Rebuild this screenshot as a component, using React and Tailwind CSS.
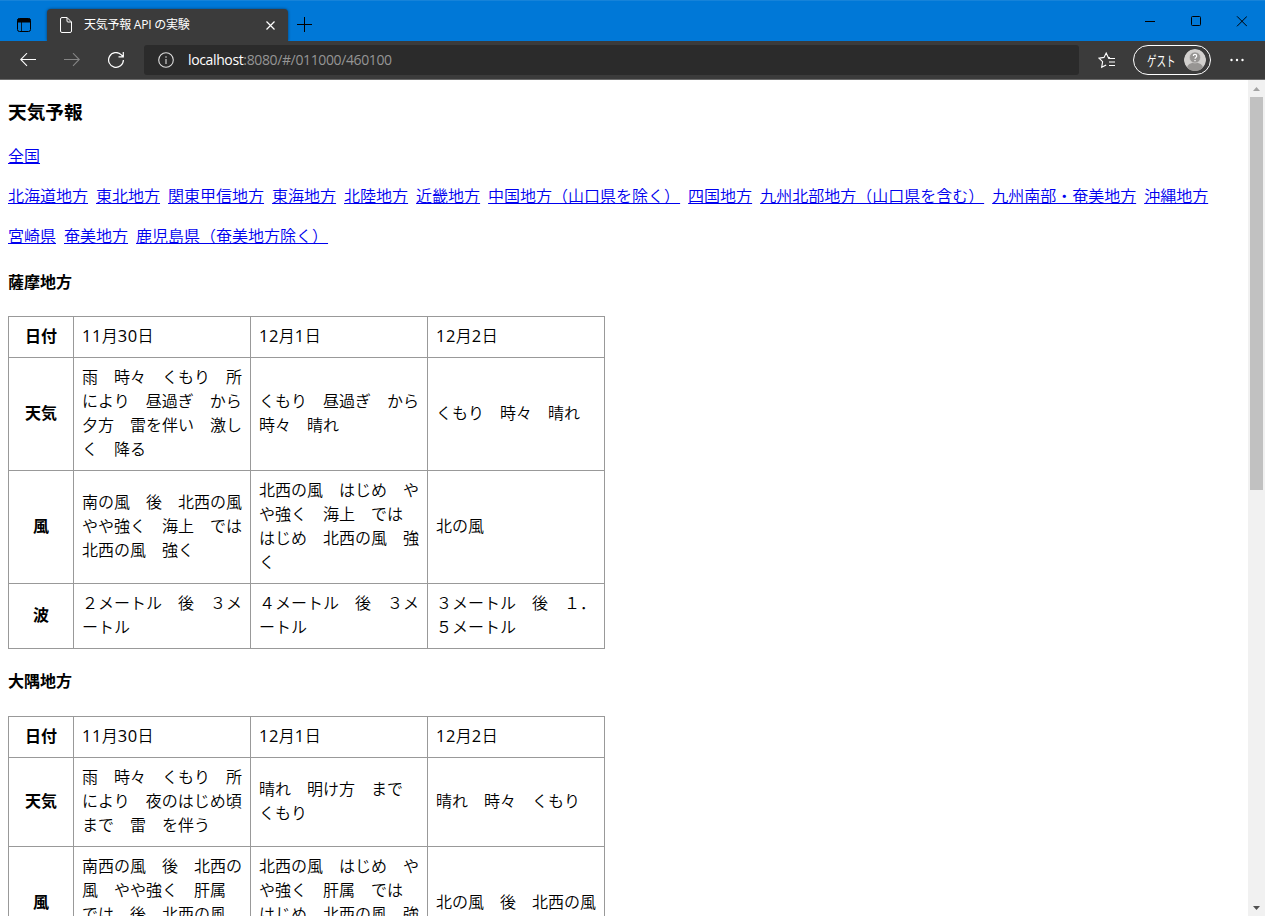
import React from 'react';

const regions = [
  '北海道地方', '東北地方', '関東甲信地方', '東海地方', '北陸地方', '近畿地方',
  '中国地方（山口県を除く）', '四国地方', '九州北部地方（山口県を含む）', '九州南部・奄美地方', '沖縄地方',
];
const prefectures = ['宮崎県', '奄美地方', '鹿児島県（奄美地方除く）'];

const areas = [
  {
    name: '薩摩地方',
    spacing: 'mb-[21px]',
    rows: [
      ['日付', ['11月30日'], ['12月1日'], ['12月2日']],
      ['天気', ['雨　時々　くもり　所', 'により　昼過ぎ　から', '夕方　雷を伴い　激し', 'く　降る'], ['くもり　昼過ぎ　から', '時々　晴れ'], ['くもり　時々　晴れ']],
      ['風', ['南の風　後　北西の風', 'やや強く　海上　では', '北西の風　強く'], ['北西の風　はじめ　や', 'や強く　海上　では', 'はじめ　北西の風　強', 'く'], ['北の風']],
      ['波', ['２メートル　後　３メ', 'ートル'], ['４メートル　後　３メ', 'ートル'], ['３メートル　後　１．', '５メートル']],
    ],
  },
  {
    name: '大隅地方',
    spacing: 'mb-[22px]',
    rows: [
      ['日付', ['11月30日'], ['12月1日'], ['12月2日']],
      ['天気', ['雨　時々　くもり　所', 'により　夜のはじめ頃', 'まで　雷　を伴う'], ['晴れ　明け方　まで', 'くもり'], ['晴れ　時々　くもり']],
      ['風', ['南西の風　後　北西の', '風　やや強く　肝属', 'では　後　北西の風', '強く'], ['北西の風　はじめ　や', 'や強く　肝属　では', 'はじめ　北西の風　強', 'く'], ['北の風　後　北西の風']],
    ],
  },
];

function Links({ items }) {
  return (
    <p className="mb-4 flex h-6 gap-2 leading-6">
      {items.map((t) => (
        <a key={t} href="#/" className="whitespace-nowrap text-[#0000ee] underline decoration-[#0000ee] decoration-1 underline-offset-1">{t}</a>
      ))}
    </p>
  );
}

// Sets half-width digits in a slightly wider Latin face than the kanji around them.
function Line({ text }) {
  return text.split(/([0-9]+)/).map((part, i) =>
    i % 2 ? (
      <span key={i} className="font-['Open_Sans',sans-serif] text-[16.5px] leading-none font-normal tracking-[0.45px]">{part}</span>
    ) : (
      part
    ),
  );
}

function Forecast({ area }) {
  return (
    <section>
      <h4 className={`${area.spacing} h-6 font-bold leading-6`}>{area.name}</h4>
      <table className="mb-[21px] w-[597px] table-fixed border-collapse">
        <colgroup>
          <col className="w-[65px]" />
          <col className="w-[177px]" />
          <col className="w-[177px]" />
          <col className="w-[177px]" />
        </colgroup>
        <tbody>
          {area.rows.map(([head, ...cells]) => (
            <tr key={head}>
              <th className="border border-[#999] p-2 leading-6 font-bold">{head}</th>
              {cells.map((lines, i) => (
                <td key={i} className="border border-[#999] p-2 align-middle leading-6">
                  {lines.map((l, j) => <div key={j} className="h-6 whitespace-nowrap"><Line text={l} /></div>)}
                </td>
              ))}
            </tr>
          ))}
        </tbody>
      </table>
    </section>
  );
}

function TitleBar() {
  return (
    <div className="flex h-[41px] shrink-0 border-t border-[#1683d9] bg-[#0078d7]">
      <div className="flex w-[47px] pt-[17px] pl-[17px]">
        <svg width="14" height="14" viewBox="0 0 14 14" fill="none" stroke="#000">
          <rect x=".5" y=".5" width="13" height="13" rx="2" />
          <path d="M1 1h12v3H1z" fill="#000" />
          <path d="M4.5 4v9.5" strokeWidth=".8" />
        </svg>
      </div>
      <div className="mt-2 flex h-8 w-[241px] items-center rounded-t-[4px] bg-[#3b3b3b] pl-[13px] text-white shadow-[0_0_3px_rgba(0,0,0,0.5)]">
        <svg width="12" height="16" viewBox="0 0 12 16" fill="none" stroke="#fff" strokeLinejoin="round">
          <path d="M.5 2Q.5.5 2 .5h5l4.500 4.500v9q0 1.500-1.500 1.500H2Q.5 15.500.5 14zM7 .5v3.500q0 1 1 1h3.500" />
        </svg>
        <span className="ml-3 w-[182px] whitespace-nowrap font-['Open_Sans','Noto_Sans_CJK_JP',sans-serif] text-xs tracking-[-0.25px]">天気予報 API の実験</span>
        <svg width="9" height="9" viewBox="0 0 9 9" fill="none" stroke="#fff" strokeWidth="1.2"><path d="M.5.5l8 8M8.500.5l-8 8" /></svg>
      </div>
      <svg className="mt-4 ml-[9px]" width="15" height="15" viewBox="0 0 15 15" fill="none" stroke="#000"><path d="M7.500 0v15M0 7.500h15" /></svg>
      <div className="ml-auto flex pt-[15px] pr-[18px]">
        <svg width="102" height="11" viewBox="0 0 102 11" fill="none" stroke="#000">
          <path d="M0 5.500h10" />
          <rect x="46.500" y=".5" width="9" height="9" rx="1" />
          <path d="M92 .3l10 10M102 .3l-10 10" />
        </svg>
      </div>
    </div>
  );
}

function Toolbar() {
  return (
    <div className="flex h-[39px] shrink-0 items-center border-b border-[#6b6b6b] bg-[#3b3b3b] pl-5">
      <svg width="16" height="14" viewBox="0 0 16 14" fill="none" stroke="#fff" strokeWidth="1.1"><path d="M16 6.500H.7M7 .2L.7 6.500 7 12.800" /></svg>
      <svg className="ml-7" width="16" height="14" viewBox="0 0 16 14" fill="none" stroke="#858585" strokeWidth="1.1"><path d="M0 6.500h15.300M9 .2L15.300 6.500 9 12.800" /></svg>
      <svg className="ml-7" width="16" height="17" viewBox="0 0 16 17" fill="none" stroke="#fff" strokeWidth="1.2"><path d="M15.400 8a7.400 7.400 0 1 1-2.300-5.400L15 4.500M15.300 0v4.800H10.500" /></svg>
      <div className="ml-5 flex h-[30px] w-[935px] items-center rounded-[3px] bg-[#2b2b2b] pl-3.5">
        <svg width="16" height="16" viewBox="0 0 16 16" fill="none" stroke="#ddd" strokeWidth="1.1">
          <circle cx="8" cy="8" r="7.300" />
          <path d="M8 7v5M8 4.200v1.500" />
        </svg>
        <span className="ml-3.5 font-['Open_Sans',sans-serif] text-sm tracking-[-0.37px] text-[#959595]"><span className="text-white">localhost</span>:8080/#/011000/460100</span>
      </div>
      <svg className="ml-[19px]" width="18" height="17" viewBox="0 0 18 17" fill="none" stroke="#fff" strokeWidth="1.1">
        <path d="M12 5.700L10.300 5.400 8.200 1 6 5.400 1 6.100l3.600 3.600-.9 5.600 4.500-2.400M10 6.500h7M11 10h6M11 13.500h6" />
      </svg>
      <div className="ml-[17px] flex h-[30px] w-[78px] items-center rounded-full border border-white pl-[13px] text-white">
        <span className="w-[37px] whitespace-nowrap"><span className="inline-block origin-left scale-x-[0.68] font-['Noto_Sans_CJK_JP',sans-serif] text-sm leading-5">ゲスト</span></span>
        <svg width="22" height="22" viewBox="0 0 22 22" className="shrink-0 rounded-full">
          <circle cx="11" cy="11" r="11" fill="#d2d0ce" />
          <ellipse cx="11" cy="19" rx="8" ry="5.500" fill="#979593" />
          <circle cx="11" cy="8.500" r="5.500" fill="#979593" stroke="#d2d0ce" strokeWidth=".6" />
          <path d="M9.300 7q0-1.700 1.700-1.700T12.700 7q0 .8-.9 1.400-.8.500-.8 1.400M11 11v1.200" fill="none" stroke="#fff" strokeWidth="1.200" />
        </svg>
      </div>
      <svg className="ml-[19px]" width="14" height="4" viewBox="0 0 14 4" fill="#fff"><circle cx="1.500" cy="2" r="1.200" /><circle cx="7" cy="2" r="1.200" /><circle cx="12.500" cy="2" r="1.200" /></svg>
    </div>
  );
}

function Scrollbar() {
  return (
    <div className="flex w-[17px] shrink-0 flex-col items-center bg-[#f1f1f1]">
      <div className="flex h-[17px] items-center"><svg width="7" height="4" viewBox="0 0 7 4" fill="#a3a3a3"><path d="M0 4l3.500-4L7 4z" /></svg></div>
      <div className="h-[393px] w-[13px] bg-[#c1c1c1]" />
      <div className="mt-auto flex h-[17px] items-center"><svg width="7" height="4" viewBox="0 0 7 4" fill="#505050"><path d="M0 0h7L3.500 4z" /></svg></div>
    </div>
  );
}

export default function App() {
  return (
    <div className="flex h-[916px] w-[1265px] flex-col overflow-hidden bg-white">
      <TitleBar />
      <Toolbar />
      <div className="flex min-h-0 flex-1">
        <main className="min-w-0 flex-1 overflow-hidden px-2 pt-[19px] font-['DejaVu_Sans','Noto_Sans_CJK_JP',sans-serif] text-base font-[350] text-black">
          <h3 className="mb-[18px] h-7 text-[18.7px] leading-7 font-bold">天気予報</h3>
          <Links items={['全国']} />
          <Links items={regions} />
          <Links items={prefectures} />
          <div className="pt-1.5">
            {areas.map((a) => <Forecast key={a.name} area={a} />)}
          </div>
        </main>
        <Scrollbar />
      </div>
    </div>
  );
}
